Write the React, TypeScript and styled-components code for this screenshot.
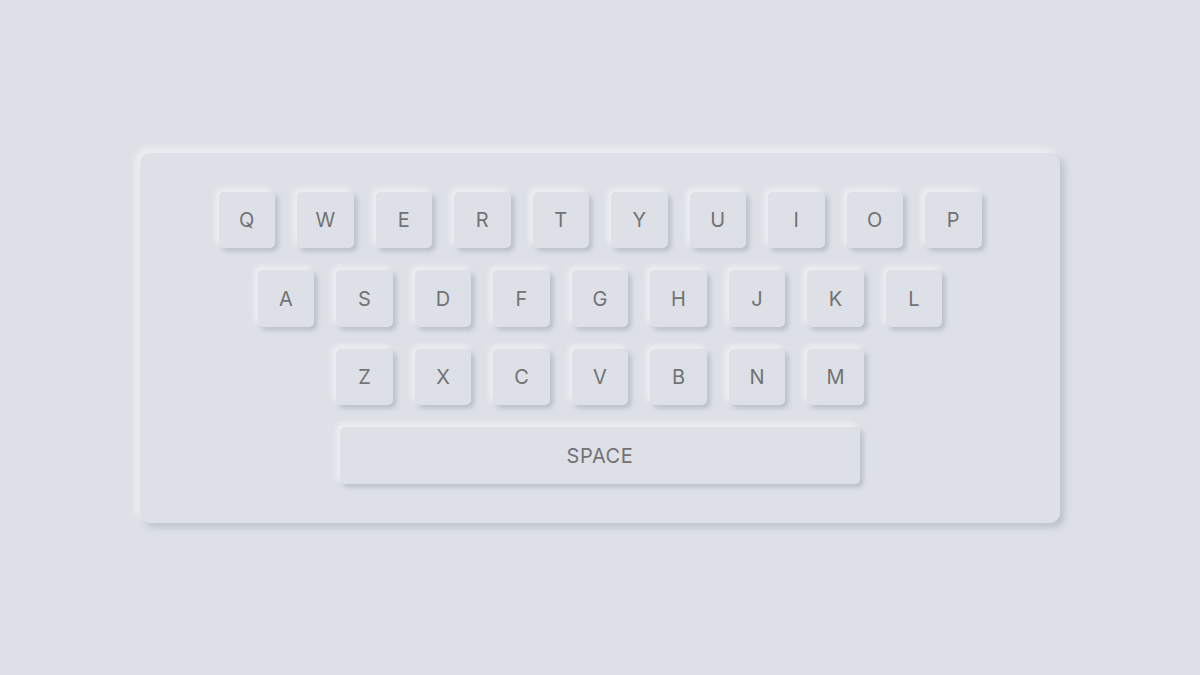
import React from "react";
import styled, { createGlobalStyle } from "styled-components";

const Global = createGlobalStyle`
  html, body { margin: 0; padding: 0; }
  body {
    background: #dde1e7;
    font-family: Inter, "Open Sans", "Noto Sans", sans-serif;
  }
`;

const Page = styled.div`
  width: 1200px;
  height: 675px;
  display: flex;
  align-items: center;
  justify-content: center;
  background: #dde1e7;
`;

const Board = styled.div`
  width: 920px;
  height: 370px;
  box-sizing: border-box;
  padding-top: 39px;
  border-radius: 10px;
  background: #dde1e7;
  box-shadow: -4px -4px 8px rgba(255, 255, 255, 0.55),
    4px 4px 7px rgba(94, 104, 121, 0.28);
  display: flex;
  flex-direction: column;
  align-items: center;
  gap: 22px;
`;

const Row = styled.div`
  display: flex;
  justify-content: center;
  gap: 22px;
`;

const Key = styled.div<{ $wide?: boolean }>`
  width: ${(p) => (p.$wide ? "520px" : "56.5px")};
  height: 56.5px;
  box-sizing: border-box;
  padding-top: 1px;
  border-radius: 5px;
  background: #dde1e7;
  display: flex;
  align-items: center;
  justify-content: center;
  color: #727272;
  font-size: 20px;
  font-weight: 400;
  letter-spacing: ${(p) => (p.$wide ? "0.6px" : "0")};
  box-shadow: -3px -3px 6px rgba(255, 255, 255, 0.55),
    3px 3px 5px rgba(94, 104, 121, 0.3);
`;

const rows = ["QWERTYUIOP", "ASDFGHJKL", "ZXCVBNM"];

export default function App() {
  return (
    <Page>
      <Global />
      <Board>
        {rows.map((r) => (
          <Row key={r}>
            {r.split("").map((c) => (
              <Key key={c}>{c}</Key>
            ))}
          </Row>
        ))}
        <Row>
          <Key $wide>SPACE</Key>
        </Row>
      </Board>
    </Page>
  );
}
